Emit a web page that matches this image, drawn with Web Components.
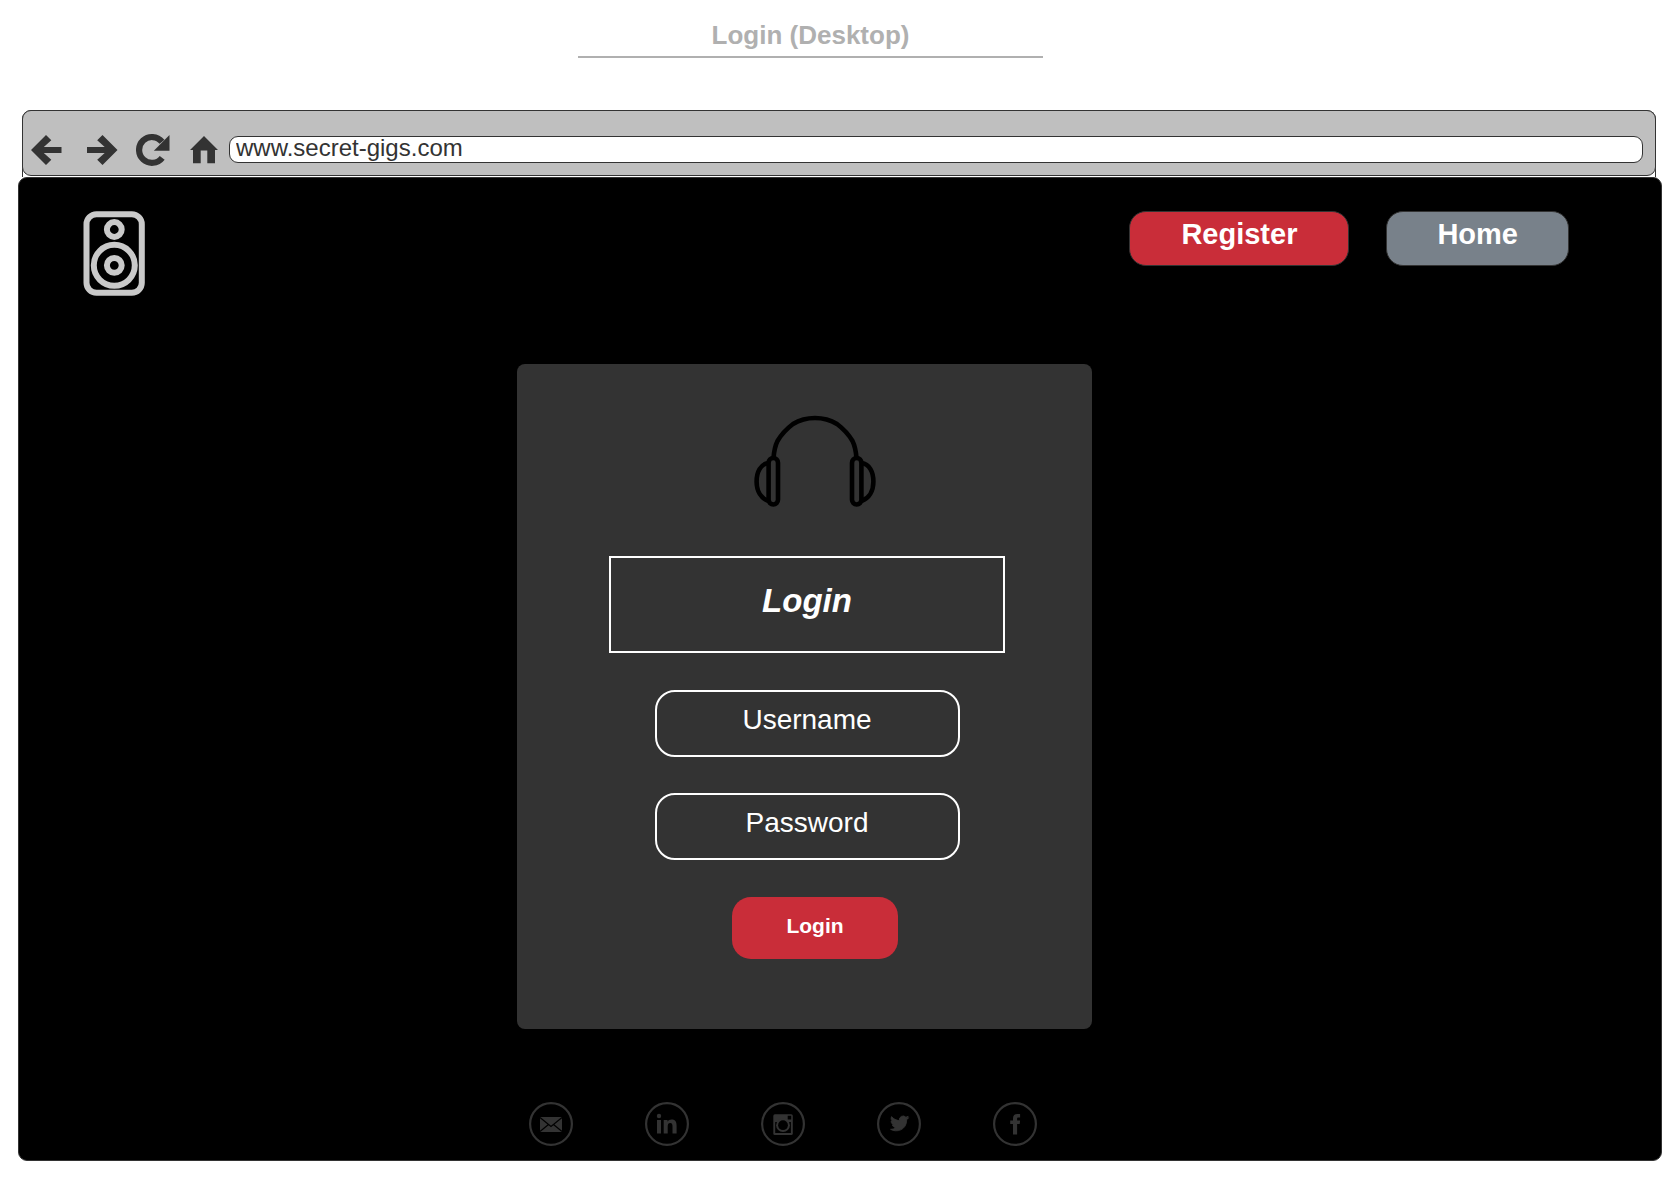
<!DOCTYPE html>
<html lang="en">
<head>
<meta charset="utf-8">
<title>Login (Desktop)</title>
<style>
  body { margin: 0; background: #fff; font-family: "Liberation Sans", Arial, sans-serif; }
</style>
</head>
<body>
<wire-page>
  <wire-title slot="title">Login (Desktop)</wire-title>
  <browser-bar slot="bar" url="www.secret-gigs.com"></browser-bar>
  <site-header slot="site">
    <pill-button>Register</pill-button>
    <pill-button variant="muted">Home</pill-button>
  </site-header>
  <login-card slot="site" heading="Login">
    <text-field label="Username" type="text"></text-field>
    <text-field label="Password" type="password"></text-field>
    <pill-button slot="action" variant="submit">Login</pill-button>
  </login-card>
  <social-links slot="site"></social-links>
</wire-page>

<script>
class Base extends HTMLElement {
  connectedCallback() {
    if (this.shadowRoot) return;
    this.attachShadow({ mode: "open" }).innerHTML =
      "<style>*{box-sizing:border-box}svg{display:block}</style>" + this.view();
  }
}

class WirePage extends Base {
  view() { return `
    <style>
      :host { display: flex; flex-direction: column; }
      .frame { margin: 52px 22px 0; padding-bottom: 1px; border: 1px solid #333; border-bottom: 0; border-radius: 9px 9px 0 0; }
      main { display: flex; flex-direction: column; margin: 0 16px 19px 18px; background: #000; border: 1px solid #333; border-radius: 9px; }
    </style>
    <slot name="title"></slot>
    <div class="frame"><slot name="bar"></slot></div>
    <main><slot name="site"></slot></main>`; }
}
customElements.define("wire-page", WirePage);

class WireTitle extends Base {
  view() { return `
    <style>
      :host { display: flex; justify-content: center; padding-right: 57px; }
      h1 { margin: 0; width: 465px; padding: 20px 0 6px; border-bottom: 2px solid #b0b0b0; color: #b0b0b0; font-size: 26px; line-height: 30px; text-align: center; }
    </style>
    <h1><slot></slot></h1>`; }
}
customElements.define("wire-title", WireTitle);

class BrowserBar extends Base {
  view() { return `
    <style>
      :host { display: flex; align-items: flex-end; margin: -1px -1px 0; height: 66px; box-sizing: border-box; padding: 0 12px 9px 8px; background: #bfbfbf; border: 1px solid #333; border-radius: 9px; color: #333; }
      button { padding: 0; border: 0; background: none; color: inherit; height: 34px; }
      .back { margin-right: 25px; }
      .forward { margin-right: 18px; }
      .reload { margin-right: 20px; }
      .home { margin-right: 11px; }
      input { flex: 1; min-width: 0; height: 27px; margin: 0 0 3px; padding: 0 6px 4px; border: 1px solid #333; border-radius: 9px; background: #fff; color: #333; font: 24px/21px "Liberation Sans", Arial, sans-serif; outline: 0; }
    </style>
    <button class="back" aria-label="Back"><svg width="31" height="34" viewBox="0 0 31 34" fill="currentColor"><path d="M0 18L15 3l5.300 5.200L12.800 15H30.500v6H12.800l7.500 6.800L15 33z"/></svg></button>
    <button class="forward" aria-label="Forward"><svg width="31" height="34" viewBox="0 0 31 34" fill="currentColor"><path d="M30.500 18L15.500 3l-5.300 5.200l7.500 6.800H0v6h17.700l-7.500 6.800L15.500 33z"/></svg></button>
    <button class="reload" aria-label="Reload"><svg width="34" height="34" viewBox="0 0 34 34"><path d="M26.200 25.800A12.900 12.900 0 1 1 26 9.800" fill="none" stroke="currentColor" stroke-width="6.200"/><path d="M33.500 3v15.700H17.800z" fill="currentColor"/></svg></button>
    <button class="home" aria-label="Home page"><svg width="28" height="34" viewBox="0 0 28 34" fill="currentColor"><path d="M14 4L28 18h-3v13.300h-7.700V18.500h-6.600v12.800H3V18H0z"/></svg></button>
    <input type="text" aria-label="Address" value="${this.getAttribute("url")}">`; }
}
customElements.define("browser-bar", BrowserBar);

class SiteHeader extends Base {
  view() { return `
    <style>
      :host { display: flex; justify-content: space-between; align-items: flex-start; padding: 33px 92px 0 64px; }
      nav { display: flex; gap: 37px; }
    </style>
    <svg width="62" height="85" viewBox="0 0 62 85" fill="none" stroke="#c9c9c9" stroke-width="6" role="img" aria-label="Speaker">
      <rect x="3.500" y="3.200" width="55.300" height="78.600" rx="10"/>
      <circle cx="31.300" cy="18.500" r="7.400"/>
      <circle cx="31.300" cy="54.300" r="20.500"/>
      <circle cx="31.300" cy="54.300" r="7.400"/>
    </svg>
    <nav><slot></slot></nav>`; }
}
customElements.define("site-header", SiteHeader);

class PillButton extends Base {
  view() { return `
    <style>
      :host { display: block; }
      button { display: block; height: 55px; padding: 0 51px 8px; border: 1px solid #333; border-radius: 17px; background: #c92d39; color: #fff; font: bold 29px/33px "Liberation Sans", Arial, sans-serif; }
      :host([variant="muted"]) button { background: #78818a; padding: 0 50px 8px; }
      :host([variant="submit"]) button { height: 62px; padding: 0 54px 6px; border: 0; border-radius: 19px; font-size: 21px; }
    </style>
    <button type="button"><slot></slot></button>`; }
}
customElements.define("pill-button", PillButton);

class TextField extends Base {
  view() { const l = this.getAttribute("label"); return `
    <style>
      :host { display: block; width: 305px; }
      input { display: block; width: 100%; height: 67px; padding: 0 20px 8px; border: 2px solid #fff; border-radius: 20px; background: none; color: #fff; font: 28px/33px "Liberation Sans", Arial, sans-serif; text-align: center; outline: 0; }
      input::placeholder { color: #fff; opacity: 1; }
    </style>
    <input type="${this.getAttribute("type")}" aria-label="${l}" placeholder="${l}">`; }
}
customElements.define("text-field", TextField);

class LoginCard extends Base {
  view() { return `
    <style>
      :host { display: flex; justify-content: center; margin: 68px 71px 0 0; }
      form { display: flex; flex-direction: column; align-items: center; width: 575px; padding: 51px 87px 70px 92px; border-radius: 8px; background: #333; }
      h2 { width: 100%; margin: 49px 0 37px; padding: 25px 0 32px; border: 2px solid #fff; color: #fff; font: italic bold 33px/36px "Liberation Sans", Arial, sans-serif; text-align: center; }
      .fields { display: flex; flex-direction: column; gap: 36px; }
      .shift { padding-left: 16px; }
      .action { margin-top: 37px; }
    </style>
    <form>
      <div class="shift">
        <svg width="122" height="92" viewBox="0 0 122 92" fill="none" stroke="#000" stroke-width="4.600" role="img" aria-label="Headphones">
          <path d="M19.500 43C20 37 21.500 30 23.500 26C27 20 33 13.500 39 9C52 1 70 1 83 9C89 13.500 95 20 98.500 26C100.500 30 102 37 102.500 43"/>
          <rect x="14.600" y="43" width="9.400" height="46.500" rx="4.700"/>
          <rect x="98" y="43" width="9.400" height="46.500" rx="4.700"/>
          <path d="M14.500 48C6.500 49 2.600 57 2.600 66.500S7 83.500 14.500 86M107.500 48C115.500 49 119.400 57 119.400 66.500S115 83.500 107.500 86"/>
        </svg>
      </div>
      <h2>${this.getAttribute("heading")}</h2>
      <div class="fields"><slot></slot></div>
      <div class="shift action"><slot name="action"></slot></div>
    </form>`; }
}
customElements.define("login-card", LoginCard);

class SocialLinks extends Base {
  view() {
    const icons = {
      Email: `<path d="M11 15h22v15H11z"/><path d="M11 15.500l11 9l11-9M11 29.500l8.500-7M33 29.500l-8.500-7" fill="none" stroke="#000" stroke-width="1.200"/>`,
      LinkedIn: `<circle cx="14" cy="14" r="2.200"/><path d="M12 18h4v13.500h-4zM18.700 18h3.800v1.800c.8-1.300 2.200-2.200 4.100-2.200c4 0 5 2.600 5 6.200v7.700h-4.100v-6.900c0-1.900-.2-3.700-2.300-3.700s-2.500 1.700-2.500 3.600v7h-4z"/>`,
      Instagram: `<rect x="12.300" y="12.300" width="19.500" height="20.800" rx="1.600"/><path d="M14.200 20h15.700v11H14.200zM26.700 13.800h3.500v3.600h-3.500z" fill="#000"/><circle cx="22" cy="23.200" r="6.900"/><circle cx="22" cy="23.200" r="4.900" fill="#000"/>`,
      Twitter: `<path d="M31.700 15.700l-2.100.6c.8-.5 1.300-1.200 1.600-2l-2.300.9a3.800 3.800 0 0 0-6.500 3.400c-3.200-.2-6-1.700-7.800-4c-1 1.700-.5 3.900 1.200 5l-1.700-.4c0 1.800 1.200 3.400 3 3.700l-1.700.1c.5 1.500 1.900 2.600 3.500 2.600a7.500 7.500 0 0 1-5.400 1.700c5.900 3.600 16.200 1 16.200-9.500z" stroke="currentColor" stroke-width=".8"/>`,
      Facebook: `<path d="M20 32.500V22h-2.800v-3.500H20v-2.200c0-2.900 1.500-4.300 4.500-4.300h2.600v3.500h-1.600c-1.100 0-1.400.5-1.400 1.300v1.700h3l-.4 3.500h-2.600v10.500z"/>`
    };
    return `
    <style>
      :host { display: flex; justify-content: center; gap: 72px; padding: 73px 114px 14px 0; }
      a { display: block; color: #333; }
    </style>` + Object.entries(icons).map(([name, shape]) => `
      <a href="#${name.toLowerCase()}" aria-label="${name}"><svg width="44" height="44" viewBox="0 0 44 44" fill="currentColor"><circle cx="22" cy="22" r="20.900" fill="none" stroke="currentColor" stroke-width="2.200"/>${shape}</svg></a>`).join("");
  }
}
customElements.define("social-links", SocialLinks);
</script>
</body>
</html>
